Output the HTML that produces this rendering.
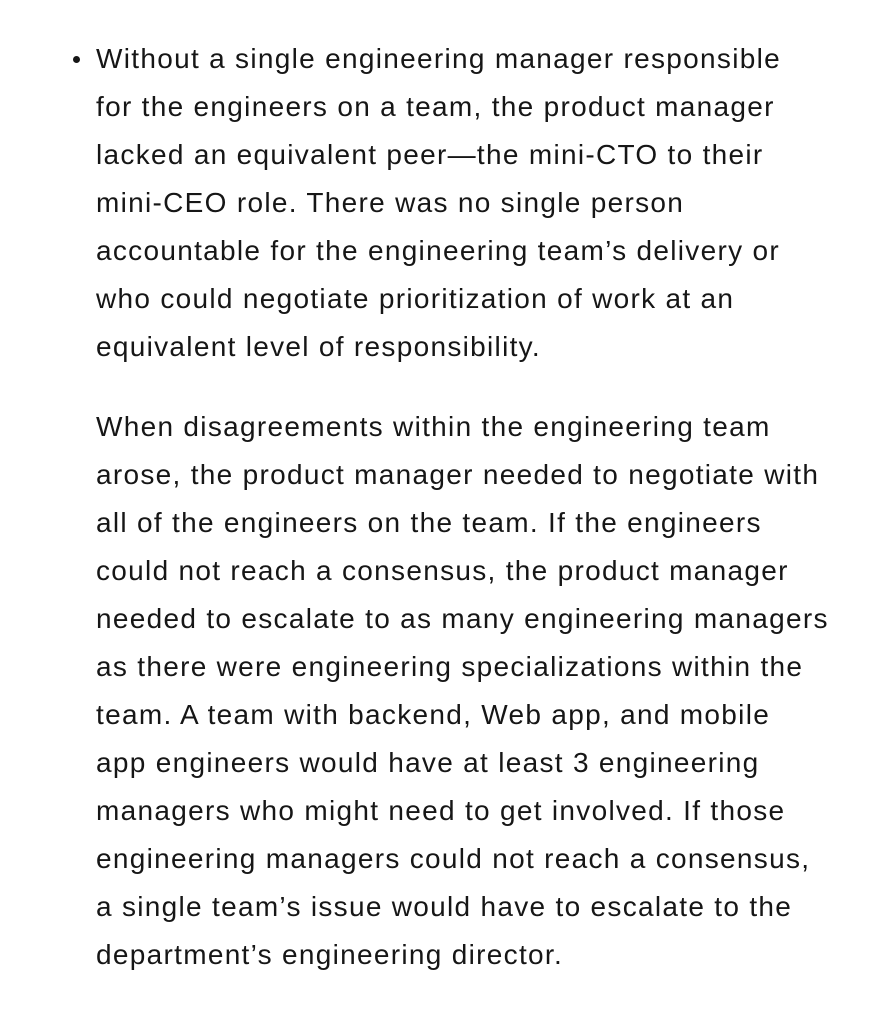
<!DOCTYPE html>
<html>
<head>
<meta charset="utf-8">
<style>
html,body{margin:0;padding:0;background:#fff;}
body{width:872px;height:1018px;overflow:hidden;font-family:"Liberation Sans","DejaVu Sans",sans-serif;color:#161616;}
.wrap{position:absolute;left:96px;top:35px;font-size:28px;line-height:48px;white-space:nowrap;letter-spacing:1.3px;}
p{margin:0 0 32px 0;}
.bullet{position:absolute;left:73px;top:56px;width:7px;height:7px;border-radius:50%;background:#161616;}
</style>
</head>
<body>
<div class="bullet"></div>
<div class="wrap">
<p>Without a single engineering manager responsible<br>for the engineers on a team, the product manager<br>lacked an equivalent peer—the mini-CTO to their<br>mini-CEO role. There was no single person<br>accountable for the engineering team’s delivery or<br>who could negotiate prioritization of work at an<br>equivalent level of responsibility.</p>
<p>When disagreements within the engineering team<br>arose, the product manager needed to negotiate with<br>all of the engineers on the team. If the engineers<br>could not reach a consensus, the product manager<br>needed to escalate to as many engineering managers<br>as there were engineering specializations within the<br>team. A team with backend, Web app, and mobile<br>app engineers would have at least 3 engineering<br>managers who might need to get involved. If those<br>engineering managers could not reach a consensus,<br>a single team’s issue would have to escalate to the<br>department’s engineering director.</p>
</div>
</body>
</html>
